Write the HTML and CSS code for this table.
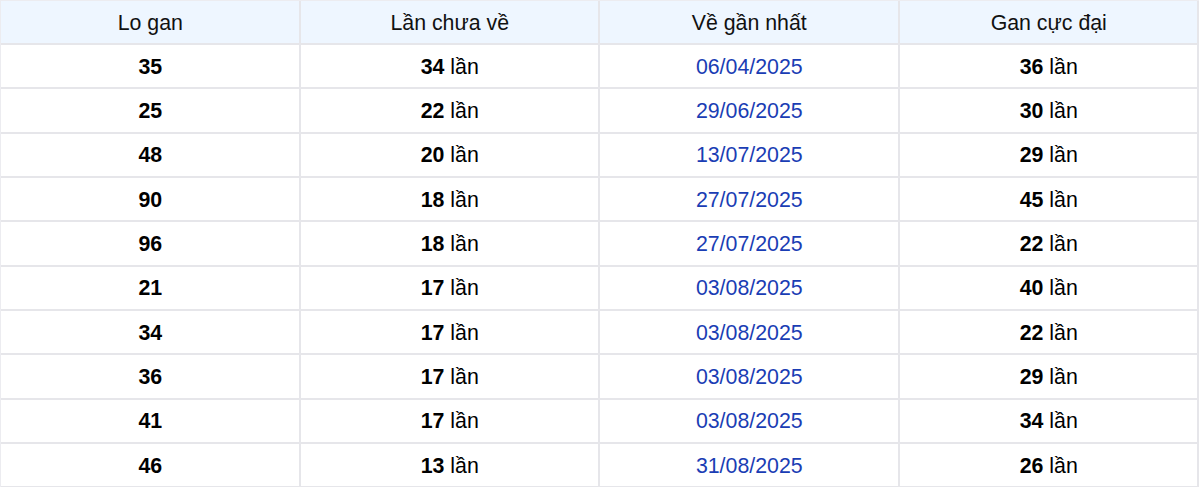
FILE: index.html
```html
<!DOCTYPE html>
<html lang="vi">
<head>
<meta charset="utf-8">
<title>Lo gan</title>
<link rel="stylesheet" href="styles.css">
</head>
<body>
<table class="gan-table">
  <thead>
    <tr><th>Lo gan</th><th>Lần chưa về</th><th>Về gần nhất</th><th>Gan cực đại</th></tr>
  </thead>
  <tbody>
    <tr><td><b>35</b></td><td><b>34</b> lần</td><td class="date">06/04/2025</td><td><b>36</b> lần</td></tr>
    <tr><td><b>25</b></td><td><b>22</b> lần</td><td class="date">29/06/2025</td><td><b>30</b> lần</td></tr>
    <tr><td><b>48</b></td><td><b>20</b> lần</td><td class="date">13/07/2025</td><td><b>29</b> lần</td></tr>
    <tr><td><b>90</b></td><td><b>18</b> lần</td><td class="date">27/07/2025</td><td><b>45</b> lần</td></tr>
    <tr><td><b>96</b></td><td><b>18</b> lần</td><td class="date">27/07/2025</td><td><b>22</b> lần</td></tr>
    <tr><td><b>21</b></td><td><b>17</b> lần</td><td class="date">03/08/2025</td><td><b>40</b> lần</td></tr>
    <tr><td><b>34</b></td><td><b>17</b> lần</td><td class="date">03/08/2025</td><td><b>22</b> lần</td></tr>
    <tr><td><b>36</b></td><td><b>17</b> lần</td><td class="date">03/08/2025</td><td><b>29</b> lần</td></tr>
    <tr><td><b>41</b></td><td><b>17</b> lần</td><td class="date">03/08/2025</td><td><b>34</b> lần</td></tr>
    <tr><td><b>46</b></td><td><b>13</b> lần</td><td class="date">31/08/2025</td><td><b>26</b> lần</td></tr>
  </tbody>
</table>
</body>
</html>
```
FILE: styles.css
```css
html, body {
  margin: 0;
  padding: 0;
  background: #ffffff;
}
body {
  font-family: "Liberation Sans", Arial, sans-serif;
  font-size: 21.33px;
  color: #000;
}
.gan-table {
  width: 1199px;
  border-collapse: separate;
  border-spacing: 0;
  table-layout: fixed;
  border-top: 1px solid #ececf0;
  border-left: 1px solid #ececf0;
}
.gan-table th,
.gan-table td {
  border-right: 2px solid #e6e6ea;
  border-bottom: 2px solid #e6e6ea;
  height: 44.33px;
  padding: 2px 0 0 1px;
  text-align: center;
  vertical-align: middle;
  box-sizing: border-box;
}
.gan-table th {
  height: 44px;
  background: #eef6ff;
  font-weight: normal;
  color: #111;
}
.gan-table td b {
  font-weight: bold;
}
.gan-table td.date {
  color: #1a3db4;
}
```
